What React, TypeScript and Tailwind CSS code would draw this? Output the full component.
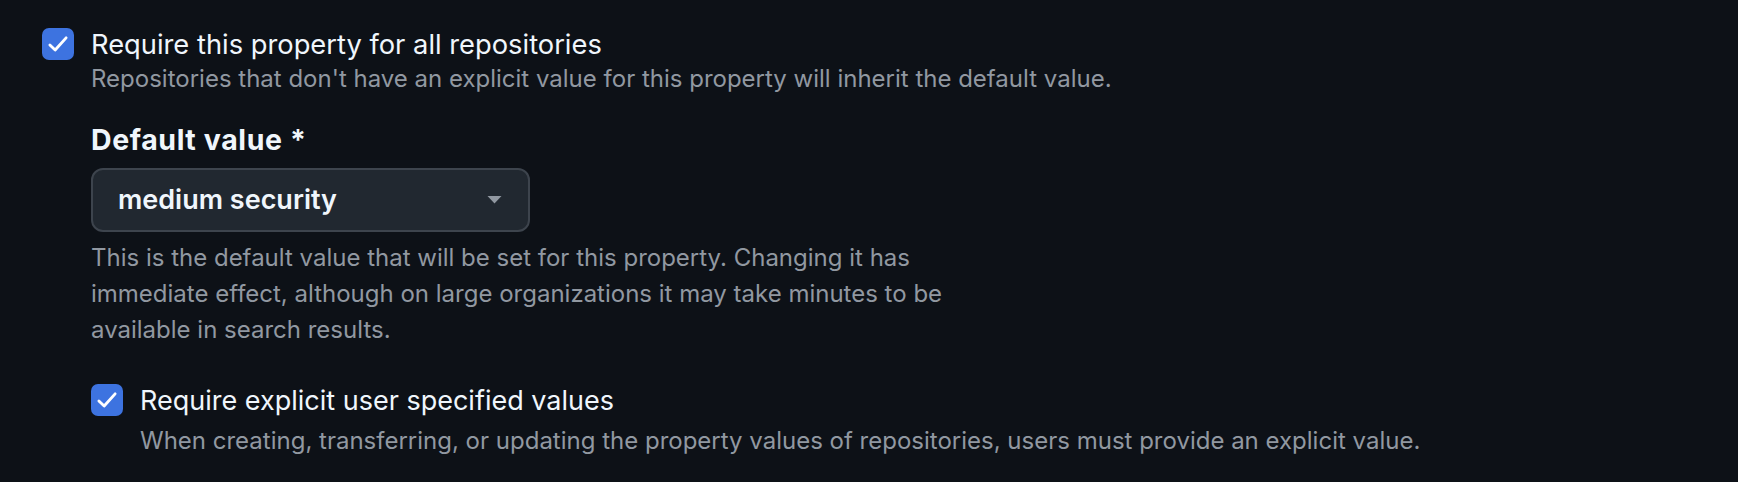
import React from 'react';

const Check = () => (
  <span className="flex h-8 w-8 shrink-0 items-center justify-center rounded-[7px] bg-[#3d73e0]">
    <svg width="24" height="24" viewBox="0 0 16 16" fill="none">
      <path d="M2.6 8.6 6.1 12 13.4 3.9" stroke="#ffffff" strokeWidth="1.9" strokeLinecap="round" strokeLinejoin="round" />
    </svg>
  </span>
);

export default function App() {
  return (
    <div className="min-h-screen w-full bg-[#0d1117] pl-[42px] pt-[28px] font-['Inter','Noto_Sans',sans-serif] antialiased">
      {/* Require for all repositories */}
      <div className="flex items-start gap-[17px]">
        <Check />
        <div className="mt-px">
          <div className="text-[27.3px] leading-[32px] text-[#f0f6fc]">Require this property for all repositories</div>
          <div className="text-[24px] leading-[36px] text-[#9198a1]">
            Repositories that don't have an explicit value for this property will inherit the default value.
          </div>

          {/* Default value */}
          <div className="mt-[27px] text-[28.5px] font-bold leading-[32px] tracking-[0.6px] text-[#f0f6fc]">Default value *</div>
          <div className="mt-[12px] flex h-[64px] w-[439px] items-center justify-between rounded-[12px] border-2 border-[#3d444d] bg-[#212830] pl-[25px] pr-[26px]">
            <span className="text-[27px] font-semibold text-[#f0f6fc]">medium security</span>
            <svg width="15" height="8" viewBox="0 0 14 8">
              <path d="M0 0h14L7 7.5z" fill="#9198a1" />
            </svg>
          </div>
          <p className="mt-[8px] w-[880px] text-[24px] leading-[36px] text-[#9198a1]">
            This is the default value that will be set for this property. Changing it has immediate effect, although on
            large organizations it may take minutes to be available in search results.
          </p>

          {/* Explicit values */}
          <div className="mt-[36px] flex items-start gap-[17px]">
            <Check />
            <div className="mt-px">
              <div className="text-[27px] leading-[32px] text-[#f0f6fc]">Require explicit user specified values</div>
              <div className="mt-[6px] text-[24px] leading-[36px] text-[#9198a1]">
                When creating, transferring, or updating the property values of repositories, users must provide an explicit value.
              </div>
            </div>
          </div>
        </div>
      </div>
    </div>
  );
}
